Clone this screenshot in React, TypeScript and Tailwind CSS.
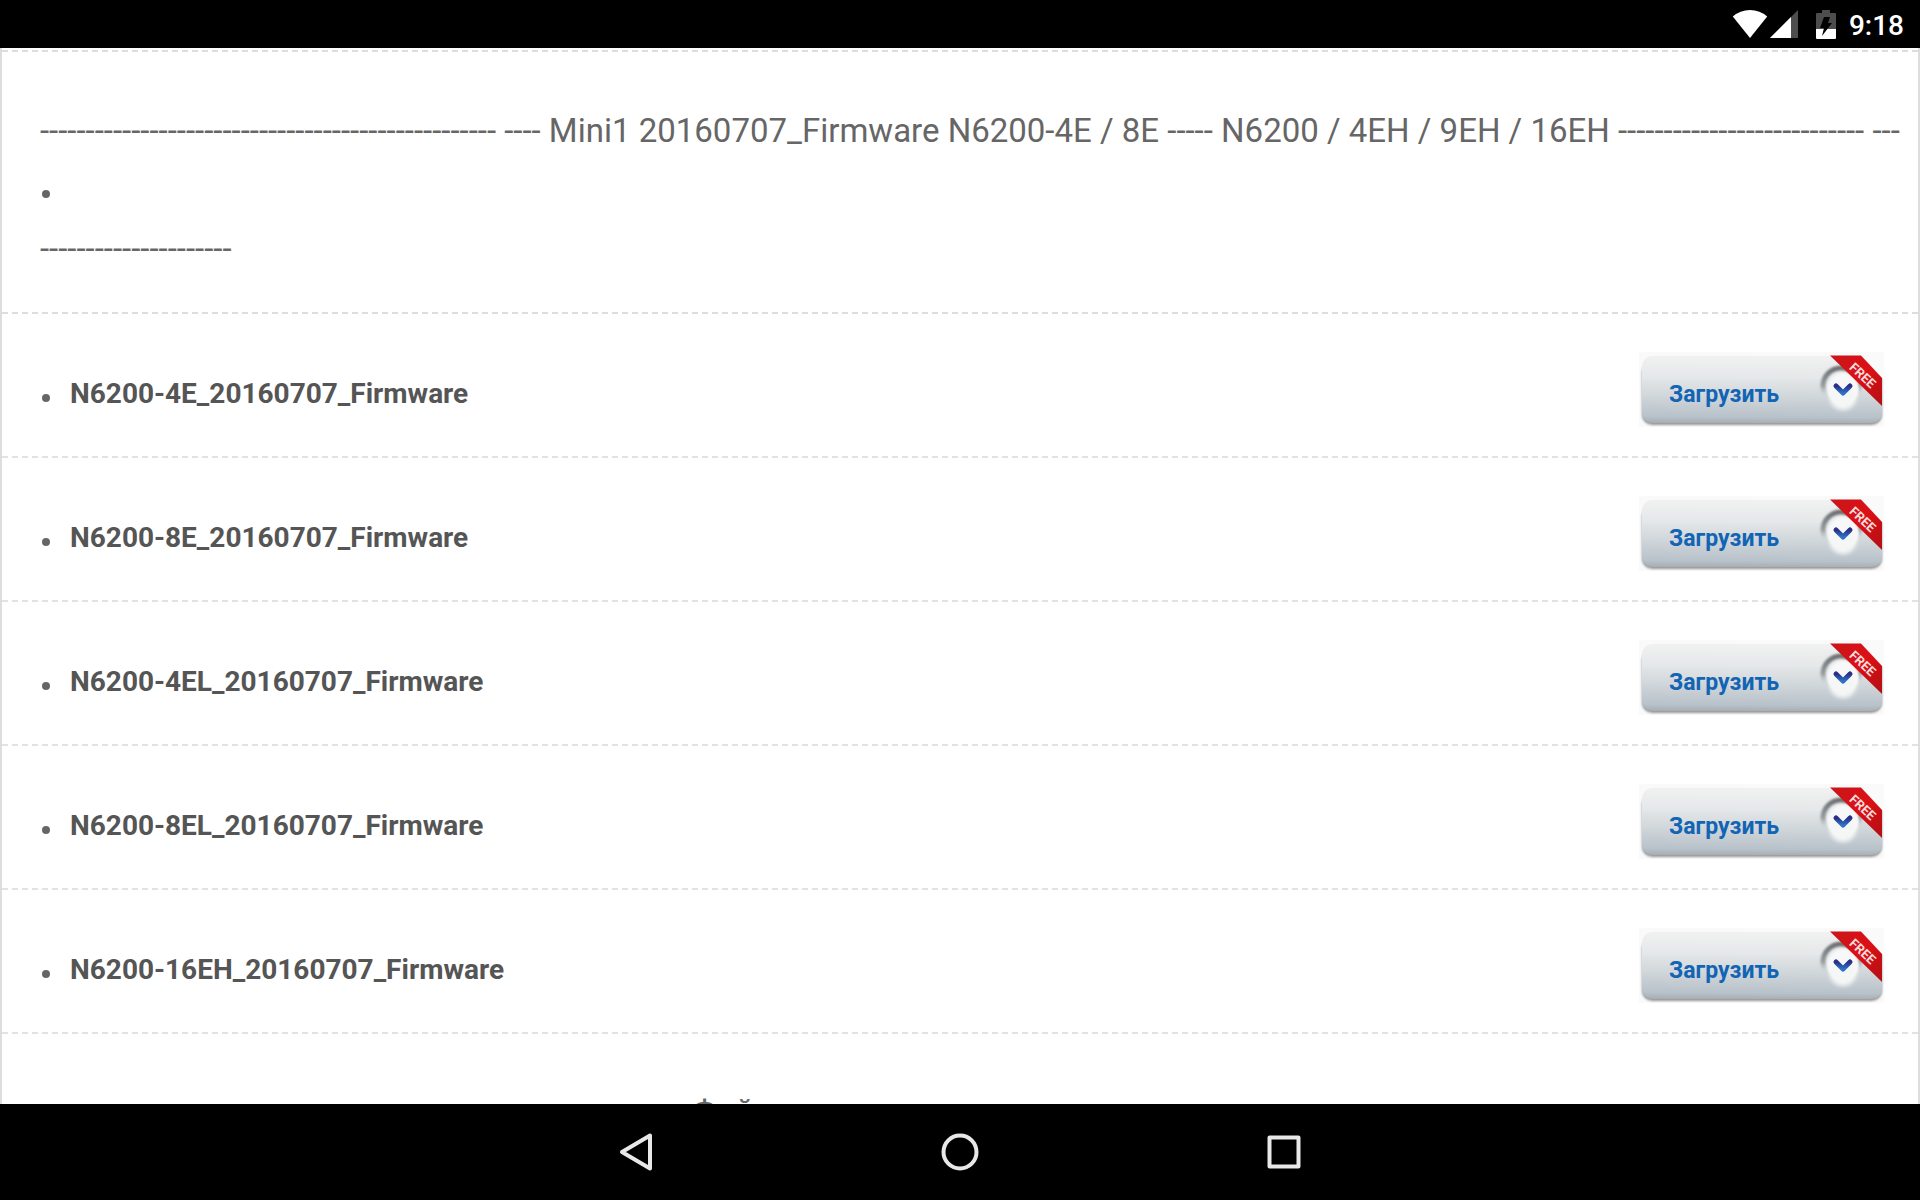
interface Firmware {
    id: number;
    name: string;
}

const firmwares: Firmware[] = [
    { id: 1, name: "N6200-4E_20160707_Firmware" },
    { id: 2, name: "N6200-8E_20160707_Firmware" },
    { id: 3, name: "N6200-4EL_20160707_Firmware" },
    { id: 4, name: "N6200-8EL_20160707_Firmware" },
    { id: 5, name: "N6200-16EH_20160707_Firmware" },
]

function StatusBar ()
{
    return (
        <header className="flex h-12 shrink-0 items-center justify-end bg-black pr-4 text-white">
            <svg className="h-7 w-9" viewBox="0 0 36 28" aria-label="Wi-Fi">
                <path d="M18 28 L.8 6.6 Q8 0 18 0 Q28 0 35.200 6.600 Z" fill="#fff" />
            </svg>
            <svg className="ml-0.5 h-7 w-7" viewBox="0 0 28 28" aria-label="Signal">
                <path d="M28 0 V28 H0 Z" fill="#4d4d4d" />
                <path d="M21 7 V28 H0 Z" fill="#fff" />
            </svg>
            <svg className="ml-[18px] h-[29px] w-5" viewBox="0 0 20 29" aria-label="Battery">
                <path d="M6 0 H14 V3 H19 Q20 3 20 4 V19 H0 V4 Q0 3 1 3 H6 Z" fill="#4d4d4d" />
                <path d="M0 19 H20 V28 Q20 29 19 29 H1 Q0 29 0 28 Z" fill="#fff" />
                <path d="M8 7 H14 L12 13 H16 L6 26 L8 18 H4 Z" fill="#000" />
            </svg>
            <span className="ml-[13px] pt-1 text-[28px] leading-8 font-medium">9:18</span>
        </header>
    )
}

function Bullet ()
{
    return <span className="mt-2 ml-0.5 block h-2 w-2 shrink-0 rounded-full bg-[#666]"></span>
}

function DownloadButton ({ name }: { name: string })
{
    return (
        <a href="#" aria-label={`Загрузить ${name}`} className="relative block h-[75px] w-[245px] shrink-0 pt-2.5 pl-[30px]">
            <svg className="absolute inset-0 h-full w-full" viewBox="0 0 245 75" aria-hidden="true">
                <defs>
                    <linearGradient id="btnBody" x1=".02" y1="0" x2="0" y2="1">
                        <stop offset="0" stopColor="#f1f1f1" />
                        <stop offset=".3" stopColor="#e6e8e9" />
                        <stop offset=".6" stopColor="#d0d6da" />
                        <stop offset=".9" stopColor="#b8c2ca" />
                        <stop offset="1" stopColor="#a6adb2" />
                    </linearGradient>
                    <linearGradient id="btnRing" x1="0" y1="0" x2="0" y2="1">
                        <stop offset="0" stopColor="#6c6f72" />
                        <stop offset=".5" stopColor="#979ca0" />
                        <stop offset=".8" stopColor="#cfd5d9" stopOpacity="0" />
                    </linearGradient>
                    <linearGradient id="btnRibbon" x1="0" y1="0" x2="1" y2="1">
                        <stop offset="0" stopColor="#c8161b" />
                        <stop offset=".5" stopColor="#dc1016" />
                        <stop offset="1" stopColor="#b00f14" />
                    </linearGradient>
                    <linearGradient id="btnArrow" x1="0" y1="0" x2="0" y2="1">
                        <stop offset="0" stopColor="#2a2f86" />
                        <stop offset="1" stopColor="#2c74c8" />
                    </linearGradient>
                    <filter id="btnSoft" x="-20%" y="-20%" width="140%" height="140%">
                        <feGaussianBlur stdDeviation="1.2" />
                    </filter>
                    <filter id="btnGlow" x="-30%" y="-30%" width="160%" height="160%">
                        <feGaussianBlur stdDeviation="2.2" />
                    </filter>
                </defs>
                <rect x="0" y="0" width="245" height="75" fill="#fafafa" />
                <rect x="3" y="10" width="240" height="63" rx="10" fill="#777" opacity=".75" filter="url(#btnSoft)" />
                <rect x="3" y="4" width="240" height="67" rx="10" fill="url(#btnBody)" />
                <circle cx="202" cy="34" r="18" fill="none" stroke="url(#btnRing)" strokeWidth="5" filter="url(#btnSoft)" />
                <circle cx="204" cy="37" r="16" fill="#f8f8f8" filter="url(#btnSoft)" />
                <ellipse cx="204" cy="46" rx="13" ry="12" fill="#f5f6f6" filter="url(#btnGlow)" />
                <path d="M197 34 L204 41 L211 34" fill="none" stroke="url(#btnArrow)" strokeWidth="5" strokeLinecap="round" strokeLinejoin="round" />
                <path d="M222 3 H245 V28 Z" fill="#fafafa" />
                <path d="M191 3.500 H222 L243 26 V54 Z" fill="url(#btnRibbon)" />
                <text x="224" y="28" transform="rotate(43 224 23)" textAnchor="middle" fill="#f6dcdc" fontSize="13" fontWeight="700" fontFamily="Roboto, sans-serif">FREE</text>
            </svg>
            <span className="relative block text-[23px] leading-[66px] font-bold text-[#1264b4]">Загрузить</span>
        </a>
    )
}

function FirmwareRow ({ item }: { item: Firmware })
{
    return (
        <li className="flex h-36 items-center justify-between border-b-2 border-dashed border-[#e2e2e2] pt-2 pr-[34px] pl-[38px]">
            <div className="flex items-center gap-5 pt-2.5">
                <Bullet />
                <span className="text-[28px] leading-9 font-bold text-[#555]">{item.name}</span>
            </div>
            <DownloadButton name={item.name} />
        </li>
    )
}

function NavBar ()
{
    return (
        <nav className="flex h-24 shrink-0 items-center justify-center gap-[252px] bg-black">
            <button aria-label="Back" className="flex h-18 w-18 items-center justify-center">
                <svg className="h-10 w-10" viewBox="0 0 40 40" fill="none" stroke="#e8e8e8" strokeWidth="4" strokeLinejoin="round">
                    <path d="M34 3.500 V36.500 L6 20 Z" />
                </svg>
            </button>
            <button aria-label="Home" className="flex h-18 w-18 items-center justify-center">
                <svg className="h-10 w-10" viewBox="0 0 40 40" fill="none" stroke="#e8e8e8" strokeWidth="4">
                    <circle cx="20" cy="20" r="16.500" />
                </svg>
            </button>
            <button aria-label="Recent" className="flex h-18 w-18 items-center justify-center">
                <svg className="h-10 w-10" viewBox="0 0 40 40" fill="none" stroke="#e8e8e8" strokeWidth="4" strokeLinejoin="round">
                    <rect x="5.500" y="5.500" width="29" height="29" />
                </svg>
            </button>
        </nav>
    )
}

function App ()
{
    return (
        <div className="flex h-screen w-full flex-col overflow-hidden bg-white font-[Roboto,sans-serif]">
            <StatusBar />

            <main className="min-h-0 flex-1 overflow-hidden border-x-2 border-[#ddd] pt-0.5">
                <div className="border-y-2 border-dashed border-[#ddd] pt-[49px] pr-4 pb-[34px] pl-[38px] text-[33px] leading-[59px] text-[#666]">
                    <h1 className="whitespace-nowrap">
                        {"-".repeat(50)} ---- Mini1 20160707_Firmware N6200-4E / 8E ----- N6200 / 4EH / 9EH / 16EH {"-".repeat(27)} ---
                    </h1>
                    <div className="flex h-[59px] items-center">
                        <Bullet />
                    </div>
                    <p>{"-".repeat(21)}</p>
                </div>

                <ul>
                    {firmwares.map((item) => (
                        <FirmwareRow key={item.id} item={item} />
                    ))}
                </ul>

                <p className="pt-12 pl-[36%] text-[33px] leading-[59px] text-[#666]">Файл</p>
            </main>

            <NavBar />
        </div>
    )
}

export default App
